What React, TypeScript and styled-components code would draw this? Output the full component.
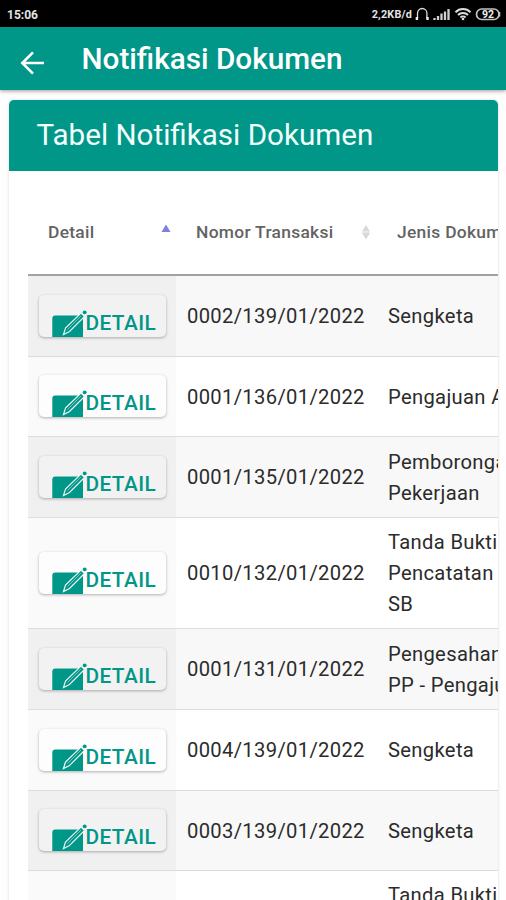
import React from 'react';
import styled, { createGlobalStyle } from 'styled-components';

const TEAL = '#009688';

const GlobalStyle = createGlobalStyle`
  * { box-sizing: border-box; }
  body {
    margin: 0;
    background: #fefefe;
    font-family: Roboto, "Liberation Sans", sans-serif;
  }
`;

const Screen = styled.div`
  width: 506px;
  height: 900px;
  overflow: hidden;
  display: flex;
  flex-direction: column;
`;

const StatusBar = styled.div`
  flex: none;
  height: 27px;
  padding: 1px 5px 0 7px;
  display: flex;
  align-items: center;
  justify-content: space-between;
  background: #000;
  color: #e4e4e4;
`;

const Clock = styled.span`
  font-size: 12px;
  font-weight: 700;
  padding-top: 1px;
`;

const StatusItems = styled.div`
  display: flex;
  align-items: center;

  svg { display: block; }
`;

const Speed = styled.span`
  font-size: 10.8px;
  font-weight: 700;
  letter-spacing: 0.2px;
  margin-right: 3px;
`;

const AppBar = styled.header`
  flex: none;
  height: 63px;
  padding-left: 20px;
  display: flex;
  align-items: center;
  background: ${TEAL};
  color: #fff;
  box-shadow: 0 1px 4px rgba(0, 0, 0, 0.4);

  svg { display: block; margin-top: 9px; }
`;

const AppTitle = styled.h1`
  margin: 1px 0 0 36.5px;
  font-size: 29.7px;
  line-height: 34px;
  font-weight: 500;
  white-space: nowrap;
`;

const Card = styled.section`
  flex: none;
  width: 489px;
  height: 820px;
  margin: 10px 0 0 9px;
  border-radius: 5px;
  background: #fff;
  overflow: hidden;
  box-shadow: 0 0 3px rgba(0, 0, 0, 0.16);
`;

const CardHeader = styled.h2`
  margin: 0;
  height: 71px;
  padding: 0 0 0 27.5px;
  background: ${TEAL};
  color: #f2fffd;
  font-size: 29.6px;
  font-weight: 400;
  line-height: 71px;
  white-space: nowrap;
`;

const Table = styled.div`
  width: 660px;
  margin-left: 19px;
`;

const Columns = styled.div`
  display: grid;
  grid-template-columns: 148px 201px 311px;
`;

const HeadRow = styled(Columns)`
  height: 105px;
  padding-top: 19px;
  border-bottom: 2px solid #a2a2a2;
`;

const HeadCell = styled.div<{ $left: number; $right: number }>`
  display: flex;
  align-items: center;
  justify-content: space-between;
  padding-left: ${p => p.$left}px;
  padding-right: ${p => p.$right}px;
  color: #636363;
  font-size: 17.4px;
  font-weight: 500;
  letter-spacing: 0.3px;
  white-space: nowrap;
`;

const Row = styled(Columns)<{ $odd: boolean; $height: number }>`
  height: ${p => p.$height}px;
  background: ${p => (p.$odd ? '#f8f8f8' : '#fff')};
  border-bottom: 1px solid #dcdcdc;
`;

const ActionCell = styled.div<{ $odd: boolean }>`
  display: flex;
  align-items: center;
  padding: 0 0 1px 10.5px;
  background: ${p => (p.$odd ? '#f0f0f0' : '#fafafa')};
`;

const DetailButton = styled.button<{ $odd: boolean }>`
  width: 127px;
  height: 42px;
  padding: 0 0 0 13px;
  border: 0;
  border-radius: 5px;
  display: flex;
  align-items: flex-end;
  background: ${p => (p.$odd ? '#f2f2f2' : '#fdfdfd')};
  color: ${TEAL};
  box-shadow: 0 1px 3px rgba(0, 0, 0, 0.3);
  font-family: inherit;
  font-size: 20.8px;
  font-weight: 500;
  line-height: 24px;
  letter-spacing: 0.4px;
  overflow: hidden;

  svg { flex: none; display: block; }
  span { padding-bottom: 2px; margin-left: -1px; }
`;

const Cell = styled.div`
  display: flex;
  align-items: center;
  padding: 1px 0 0 11px;
  color: #2b2b2b;
  font-size: 20.2px;
  line-height: 30.8px;
  letter-spacing: 0.33px;
  white-space: pre-line;
`;

type Doc = { no: string; kind: string; height: number };

const docs: Doc[] = [
  { no: '0002/139/01/2022', kind: 'Sengketa', height: 81 },
  { no: '0001/136/01/2022', kind: 'Pengajuan Awal', height: 80 },
  { no: '0001/135/01/2022', kind: 'Pemborongan\nPekerjaan', height: 81 },
  { no: '0010/132/01/2022', kind: 'Tanda Bukti\nPencatatan\nSB', height: 111 },
  { no: '0001/131/01/2022', kind: 'Pengesahan\nPP - Pengajuan', height: 81 },
  { no: '0004/139/01/2022', kind: 'Sengketa', height: 81 },
  { no: '0003/139/01/2022', kind: 'Sengketa', height: 80 },
  { no: '0009/132/01/2022', kind: 'Tanda Bukti\nPencatatan\nSB', height: 111 },
];

const BackArrow = () => (
  <svg width="25" height="24" viewBox="0 0 25 24" fill="none" stroke="#fff" strokeWidth="2.600">
    <path d="M24 12H3M13 1.300 2.300 12 13 22.700" />
  </svg>
);

const StatusIcons = () => (
  <svg width="86" height="16" viewBox="0 0 86 16" fill="none">
    <path d="M2.500 12.500V7.200a4.700 4.700 0 0 1 9.400 0V12.500" stroke="#ddd" strokeWidth="1.300" />
    <path d="M1.900 11v3M12.500 11v3" stroke="#eee" strokeWidth="2.400" />
    <path d="M19.500 14v-2M23 14v-4M26.500 14V7.500M30 14V5.500M33.500 14V3" stroke="#d0d0d0" strokeWidth="2.300" />
    <path d="M40.500 6.200a10.500 10.500 0 0 1 15 0M43 9a7 7 0 0 1 10 0M45.500 11.500a3.600 3.600 0 0 1 5 0" stroke="#ddd" strokeWidth="2" />
    <circle cx="48" cy="13" r="1.300" fill="#ddd" />
    <rect x="61.500" y="3" width="22.500" height="10.500" rx="5.200" stroke="#c4c4c4" strokeWidth="1.700" />
    <path d="M84.500 6v4.500" stroke="#c4c4c4" strokeWidth="1.600" />
    <text x="73" y="12" textAnchor="middle" fill="#f0f0f0" fontFamily="Roboto" fontWeight="700" fontSize="10.500">92</text>
  </svg>
);

const SortUp = () => (
  <svg width="10" height="20" viewBox="0 0 10 20">
    <path d="M5 2.500 9.500 10H.5z" fill="#7d80dc" />
  </svg>
);

const SortBoth = () => (
  <svg width="10" height="20" viewBox="0 0 10 20">
    <path d="M5 3 9 9.500H1zM5 17.500 9 11H1z" fill="#d9d9d9" />
    <path d="M1.200 10.200h7.600" stroke="#e8e8e8" strokeWidth="1.500" />
  </svg>
);

const EditIcon = ({ gap }: { gap: string }) => (
  <svg width="35" height="28" viewBox="0 0 35 28">
    <path d="M0.300 28V9.500Q0.300 6.500 3.300 6.500H31V28Z" fill={TEAL} />
    <path d="M11.500 25.500 13.500 19 29 4 32.500 7.500 17.500 22.500Z" fill={TEAL} stroke={gap} strokeWidth="1.200" />
    <path d="M29.500 2.500 34 7" stroke={gap} strokeWidth="2" />
    <path d="M15.500 20.500 29 7" stroke={gap} strokeWidth=".5" />
    <circle cx="32.700" cy="3.300" r="1.900" fill={TEAL} />
  </svg>
);

export default function App() {
  return (
    <Screen>
      <GlobalStyle />
      <StatusBar>
        <Clock>15:06</Clock>
        <StatusItems>
          <Speed>2,2KB/d</Speed>
          <StatusIcons />
        </StatusItems>
      </StatusBar>
      <AppBar>
        <BackArrow />
        <AppTitle>Notifikasi Dokumen</AppTitle>
      </AppBar>
      <Card>
        <CardHeader>Tabel Notifikasi Dokumen</CardHeader>
        <Table>
          <HeadRow>
            <HeadCell $left={20} $right={5.5}>Detail<SortUp /></HeadCell>
            <HeadCell $left={20} $right={6.5}>Nomor Transaksi<SortBoth /></HeadCell>
            <HeadCell $left={20} $right={6.5}>Jenis Dokumen<SortBoth /></HeadCell>
          </HeadRow>
          {docs.map((doc, i) => {
            const odd = i % 2 === 0;
            return (
              <Row key={doc.no} $odd={odd} $height={doc.height}>
                <ActionCell $odd={odd}>
                  <DetailButton $odd={odd}>
                    <EditIcon gap={odd ? '#e4f4f1' : '#f0faf8'} />
                    <span>DETAIL</span>
                  </DetailButton>
                </ActionCell>
                <Cell>{doc.no}</Cell>
                <Cell>{doc.kind}</Cell>
              </Row>
            );
          })}
        </Table>
      </Card>
    </Screen>
  );
}
